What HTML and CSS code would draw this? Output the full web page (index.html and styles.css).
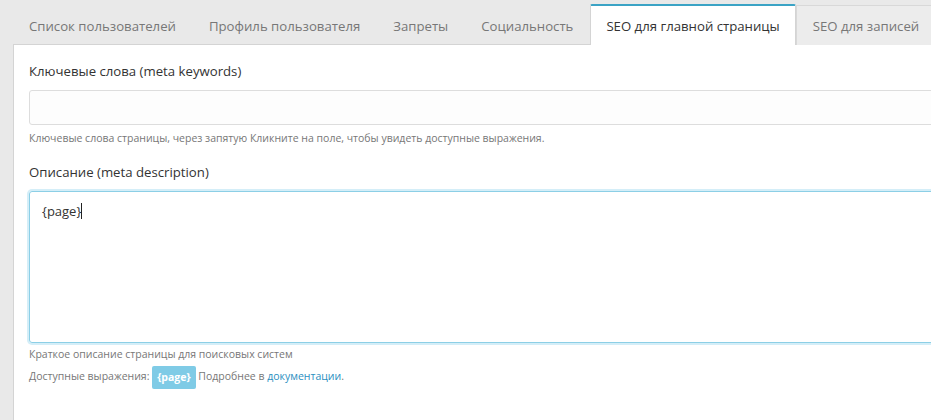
FILE: index.html
```html
<!DOCTYPE html>
<html lang="ru">
<head>
<meta charset="utf-8">
<title>SEO</title>
<link rel="stylesheet" href="styles.css">
</head>
<body>
<div class="page">
  <nav class="tabs">
    <a class="tab">Список пользователей</a>
    <a class="tab">Профиль пользователя</a>
    <a class="tab">Запреты</a>
    <a class="tab">Социальность</a>
    <a class="tab active">SEO для главной страницы</a>
    <a class="tab">SEO для записей</a>
  </nav>
  <section class="panel">
    <div class="field">
      <label class="label">Ключевые слова (meta keywords)</label>
      <div class="input"></div>
      <p class="help">Ключевые слова страницы, через запятую Кликните на поле, чтобы увидеть доступные выражения.</p>
    </div>
    <div class="field">
      <label class="label">Описание (meta description)</label>
      <div class="textarea focused">{page}<span class="caret"></span></div>
      <p class="help first">Краткое описание страницы для поисковых систем</p>
      <p class="help vars">Доступные выражения: <span class="badge">{page}</span> Подробнее в <a class="link">документации</a>.</p>
    </div>
  </section>
</div>
</body>
</html>
```

FILE: styles.css
```css
html, body {
  margin: 0;
  padding: 0;
}
body {
  background: #e9e9e9;
  font-family: "Open Sans", "Noto Sans", sans-serif;
  color: #333;
  overflow: hidden;
  width: 931px;
  height: 420px;
}
.page {
  padding-left: 13px;
}
.tabs {
  display: flex;
  align-items: flex-end;
  height: 44px;
  margin-left: -1px;
  position: relative;
  z-index: 1;
}
.tab {
  display: flex;
  align-items: center;
  height: 38px;
  padding: 1px 15.5px 0;
  border: 1px solid transparent;
  border-bottom: none;
  font-size: 13.2px;
  color: #777;
  white-space: nowrap;
  margin-bottom: -1px;
}
.tab:first-child {
  padding-left: 16px;
}
.tab.active {
  background: #fff;
  color: #333;
  border-color: #d4d4d4;
  border-top: 2px solid #3ba3c5;
  border-radius: 2px 2px 0 0;
}
.tab:last-child {
  background: #ececec;
  border-color: #d8d8d8;
  border-right: none;
}
.panel {
  width: 1000px;
  background: #fff;
  border: 1px solid #d4d4d4;
  padding: 16px 15px 40px;
  box-sizing: border-box;
  height: 380px;
}
.field {
  display: flex;
  flex-direction: column;
  margin-bottom: 16px;
}
.label {
  font-size: 13.2px;
  line-height: 20px;
  color: #333;
  margin-bottom: 9px;
}
.input {
  height: 33px;
  border: 1px solid #ddd;
  border-radius: 3px;
  background: #fdfdfd;
}
.help {
  margin: 5px 0 0;
  font-size: 10.5px;
  line-height: 16px;
  color: #777;
}
.textarea {
  height: 130px;
  border: 1px solid #8ccfe6;
  border-radius: 3px;
  box-shadow: 0 0 0 2px #d4eef8;
  padding: 10px 12px;
  font-size: 13px;
  line-height: 18px;
  color: #333;
}
.caret {
  display: inline-block;
  width: 1px;
  height: 16px;
  background: #222;
  vertical-align: -3px;
}
.help.first {
  margin-top: 3px;
}
.help.vars {
  margin-top: 3px;
  line-height: 23px;
}
.badge {
  display: inline-block;
  background: #7fcbe6;
  color: #fff;
  font-weight: 700;
  border-radius: 2px;
  padding: 3px 5px;
  line-height: 17px;
  vertical-align: middle;
}
.link {
  color: #2b8fbf;
}
```
